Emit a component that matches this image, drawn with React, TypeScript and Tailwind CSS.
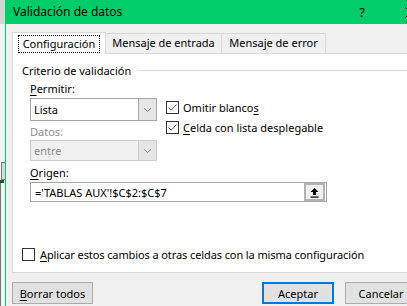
import React from "react";

const font = { fontFamily: '"Noto Sans", "Segoe UI", Arial, sans-serif' };

function Check({ checked }: { checked: boolean }) {
  return (
    <span className="inline-flex h-[13px] w-[13px] shrink-0 items-center justify-center border border-[#333333] bg-white">
      {checked && (
        <svg width="11" height="11" viewBox="0 0 11 11">
          <path d="M1.5 5.5 L4.2 8.2 L9.5 2.5" fill="none" stroke="#555" strokeWidth="1" />
        </svg>
      )}
    </span>
  );
}

function Chevron({ color }: { color: string }) {
  return (
    <svg width="9" height="6" viewBox="0 0 9 6">
      <path d="M1 1.2 L4.5 4.5 L8 1.2" fill="none" stroke={color} strokeWidth="1" />
    </svg>
  );
}

function Select({ value, disabled }: { value: string; disabled?: boolean }) {
  return (
    <div
      className={`flex w-[127px] border ${
        disabled ? "h-[21px] border-[#cccccc] bg-[#f0f0f0] text-[#8d8d8d]" : "h-[23px] border-[#a6a6a6] bg-white text-black"
      }`}
    >
      <div className="flex flex-1 items-center pl-[3px] leading-none">{value}</div>
      <div
        className={`flex w-[18px] items-center justify-center border-l ${
          disabled ? "border-[#cccccc] bg-[#e6e6e6]" : "border-[#a6a6a6] bg-[#e6e6e6]"
        }`}
      >
        <Chevron color={disabled ? "#8a8a8a" : "#7a7a7a"} />
      </div>
    </div>
  );
}

export default function App() {
  return (
    <div
      className="relative flex h-[306px] w-[407px] overflow-hidden bg-[#f0f0f0] text-[11px] text-black"
      style={font}
    >
      {/* spreadsheet strip behind the dialog */}
      <div className="flex w-[5px] shrink-0 flex-col bg-[#f3f3f3]">
        <div className="h-[24px] bg-[#d4d4d4]" />
        <div className="h-[138px]" />
        <div className="ml-[1px] h-[18px] w-[4px] border-y border-l border-[#7a7a7a] bg-[#d8d8d8]" />
        <div className="h-[3px] w-[4px] bg-[#1e5b34]" />
        <div className="flex-1 border-l border-[#777]" />
      </div>

      {/* dialog */}
      <div className="flex w-[412px] shrink-0 flex-col border-l border-[#00cc6a]">
        <div className="flex h-[24px] items-center bg-[#00cc6a] pl-[7px]">
          <span className="text-[12px] leading-none">Validación de datos</span>
          <span className="ml-auto mr-[40px] text-[13px] leading-none">?</span>
          <svg className="mr-[1px]" width="11" height="11" viewBox="0 0 11 11">
            <path d="M0.5 0.5 L10.5 10.5 M10.5 0.5 L0.5 10.5" stroke="#111" strokeWidth="1" />
          </svg>
        </div>

        <div className="flex flex-1 flex-col pl-[6px]">
          {/* tabs */}
          <div className="mt-[8px] flex h-[21px] items-end">
            <div className="relative z-10 -mb-px flex h-[22px] w-[94px] items-center justify-center border border-b-0 border-[#d9d9d9] bg-white">
              <span className="border border-dotted border-black px-[4px] pb-[1px] leading-[15px]">
                Configuración
              </span>
            </div>
            <div className="flex h-[20px] w-[116px] items-center justify-center border border-l-0 border-b-0 border-[#d9d9d9] bg-[#f0f0f0]">
              Mensaje de entrada
            </div>
            <div className="flex h-[20px] w-[104px] items-center justify-center border border-l-0 border-b-0 border-[#d9d9d9] bg-[#f0f0f0]">
              Mensaje de error
            </div>
          </div>

          {/* panel */}
          <div className="flex h-[220px] flex-col border border-[#d9d9d9] bg-white pl-[9px]">
            <div className="mt-[8px] flex h-[16px] items-center">
              <span className="leading-none">Criterio de validación</span>
              <div className="ml-[6px] h-px flex-1 bg-[#dcdcdc]" />
            </div>

            <div className="ml-[8px] flex">
              <div className="flex w-[127px] flex-col">
                <div className="mt-[3px] h-[16px] leading-[16px]">
                  <span className="underline underline-offset-2">P</span>ermitir:
                </div>
                <div className="mt-px">
                  <Select value="Lista" />
                </div>
                <div className="mt-[3px] h-[16px] leading-[16px] text-[#8d8d8d]">Datos:</div>
                <div>
                  <Select value="entre" disabled />
                </div>
              </div>
              <div className="ml-[9px] mt-[21px] flex flex-col gap-[4px]">
                <div className="flex h-[16px] items-center gap-[4px]">
                  <Check checked />
                  <span className="leading-none">
                    Omitir blanco<span className="underline underline-offset-2">s</span>
                  </span>
                </div>
                <div className="flex h-[16px] items-center gap-[4px]">
                  <Check checked />
                  <span className="leading-none">
                    <span className="underline underline-offset-2">C</span>elda con lista desplegable
                  </span>
                </div>
              </div>
            </div>

            <div className="ml-[8px] mt-[4px] h-[16px] leading-[16px]">
              <span className="underline underline-offset-2">O</span>rigen:
            </div>
            <div className="ml-[8px] mt-px flex h-[20px] w-[297px] items-center border border-[#a6a6a6] bg-white pr-px">
              <span className="flex-1 pl-[4px] leading-none">='TABLAS AUX'!$C$2:$C$7</span>
              <div className="flex h-[18px] w-[21px] items-center justify-center border-2 border-[#b4b4b4] bg-[#f0f0f0]">
                <svg width="11" height="11" viewBox="0 0 11 11">
                  <path d="M5.5 1 L9.5 5 L7 5 L7 8 L4 8 L4 5 L1.5 5 Z" fill="#000" />
                  <rect x="1.5" y="9.5" width="8" height="1.2" fill="#000" />
                </svg>
              </div>
            </div>

            <div className="mb-[10px] mt-auto flex h-[16px] items-center gap-[5px]">
              <Check checked={false} />
              <span className="leading-none tracking-[-0.1px]">
                <span className="underline underline-offset-2">A</span>plicar estos cambios a otras celdas con la misma configuración
              </span>
            </div>
          </div>

          {/* buttons */}
          <div className="mt-[9px] flex">
            <div className="flex h-[22px] w-[81px] items-center justify-center border border-[#adadad] bg-[#e1e1e1] leading-none">
              <span>
                <span className="underline underline-offset-2">B</span>orrar todos
              </span>
            </div>
            <div className="ml-[169px] flex h-[22px] w-[72px] items-center justify-center border-2 border-[#0078d7] bg-[#e1e1e1] leading-none">
              Aceptar
            </div>
            <div className="ml-[11px] flex h-[22px] w-[72px] items-center justify-center border border-[#adadad] bg-[#e1e1e1] leading-none">
              Cancelar
            </div>
          </div>
        </div>
      </div>
    </div>
  );
}
